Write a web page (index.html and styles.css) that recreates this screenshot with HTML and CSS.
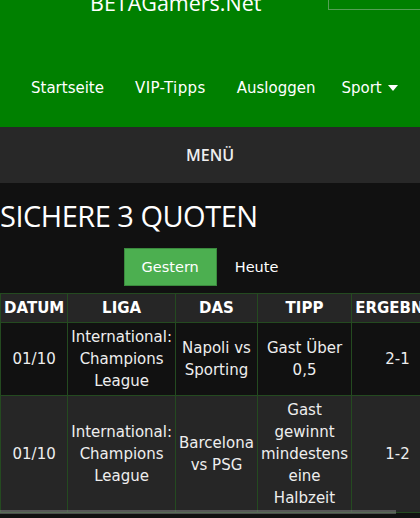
FILE: index.html
```html
<!DOCTYPE html>
<html lang="de">
<head>
<meta charset="utf-8">
<title>BETAGamers.Net</title>
<link rel="stylesheet" href="styles.css">
</head>
<body>
<header class="site-header">
  <div class="header-top">
    <div class="site-title">BETAGamers.Net</div>
    <div class="search-box"></div>
  </div>
  <nav class="main-nav">
    <a href="#">Startseite</a>
    <a href="#">VIP-Tipps</a>
    <a href="#">Ausloggen</a>
    <a href="#" class="has-caret">Sport<span class="caret"></span></a>
  </nav>
</header>
<div class="menu-bar">MENÜ</div>
<main class="content">
  <h1 class="page-title">SICHERE 3 QUOTEN</h1>
  <div class="tabs">
    <a href="#" class="tab active">Gestern</a>
    <a href="#" class="tab">Heute</a>
  </div>
  <div class="table-wrap">
    <table class="tips">
      <thead>
        <tr><th>DATUM</th><th>LIGA</th><th>DAS</th><th>TIPP</th><th>ERGEBNIS</th></tr>
      </thead>
      <tbody>
        <tr class="row-dark">
          <td>01/10</td>
          <td>International:<br>Champions<br>League</td>
          <td>Napoli vs<br>Sporting</td>
          <td>Gast Über<br>0,5</td>
          <td>2-1</td>
        </tr>
        <tr class="row-light">
          <td>01/10</td>
          <td>International:<br>Champions<br>League</td>
          <td>Barcelona<br>vs PSG</td>
          <td>Gast<br>gewinnt<br>mindestens<br>eine<br>Halbzeit</td>
          <td>1-2</td>
        </tr>
      </tbody>
    </table>
  </div>
</main>
<div class="hscroll"><div class="hscroll-thumb"></div></div>
</body>
</html>
```
FILE: styles.css
```css
html, body {
  margin: 0;
  padding: 0;
  background: #111111;
  color: #ffffff;
  font-family: "DejaVu Sans", Verdana, sans-serif;
  overflow: hidden;
}

.site-header {
  background: #008000;
}

.header-top {
  display: flex;
  align-items: flex-end;
  height: 10px;
}

.site-title {
  margin-left: 90px;
  font-family: "Open Sans", sans-serif;
  font-size: 21.5px;
  line-height: 1;
  margin-bottom: -3px;
  color: #ffffff;
  white-space: nowrap;
}

.search-box {
  margin-left: auto;
  width: 92px;
  height: 30px;
  flex: none;
  border: 1px solid #55a055;
  border-right: none;
  box-sizing: border-box;
}

.main-nav {
  display: flex;
  gap: 31px;
  padding: 68px 0 29px 31px;
  line-height: 20px;
  font-size: 15px;
}

.main-nav a {
  color: #ffffff;
  text-decoration: none;
  display: flex;
  align-items: center;
}

.main-nav a:nth-child(2) {
  letter-spacing: 0.4px;
}

.main-nav .has-caret {
  margin-left: -5px;
}

.caret {
  display: inline-block;
  width: 0;
  height: 0;
  margin-left: 6px;
  border-left: 5px solid transparent;
  border-right: 5px solid transparent;
  border-top: 6px solid #ffffff;
}

.menu-bar {
  background: #282828;
  height: 56px;
  line-height: 56px;
  text-align: center;
  font-family: "Open Sans", sans-serif;
  font-weight: 600;
  font-size: 16px;
  color: #eeeeee;
}

.content {
  background: #111111;
}

.page-title {
  margin: 13px 0 0 0;
  font-family: "Open Sans", sans-serif;
  font-weight: 400;
  font-size: 29px;
  line-height: 40px;
  letter-spacing: -0.5px;
  color: #ffffff;
}

.tabs {
  display: flex;
  justify-content: center;
  margin-top: 12px;
}

.tab {
  display: block;
  padding: 7px 17px;
  line-height: 22px;
  font-size: 14.5px;
  color: #ffffff;
  text-decoration: none;
  border: 1px solid transparent;
}

.tab.active {
  background: #4caf50;
  border-color: #3b8a3e;
}

.table-wrap {
  margin-top: 7px;
  overflow: hidden;
}

.tips {
  border-collapse: collapse;
  font-size: 15px;
  line-height: 22px;
  color: #eeeeee;
  text-align: center;
  white-space: nowrap;
}

.tips th,
.tips td {
  border: 1px solid #244a20;
  padding: 3px 3px;
}

.tips th {
  background: #262626;
  color: #ffffff;
  font-weight: bold;
}

.row-dark td {
  background: #111111;
}

.row-light td {
  background: #262626;
}

.hscroll {
  position: fixed;
  left: 0;
  right: 0;
  bottom: 4px;
  height: 4px;
}

.hscroll-thumb {
  width: 396px;
  height: 4px;
  background: rgba(150, 150, 150, 0.45);
}
```
